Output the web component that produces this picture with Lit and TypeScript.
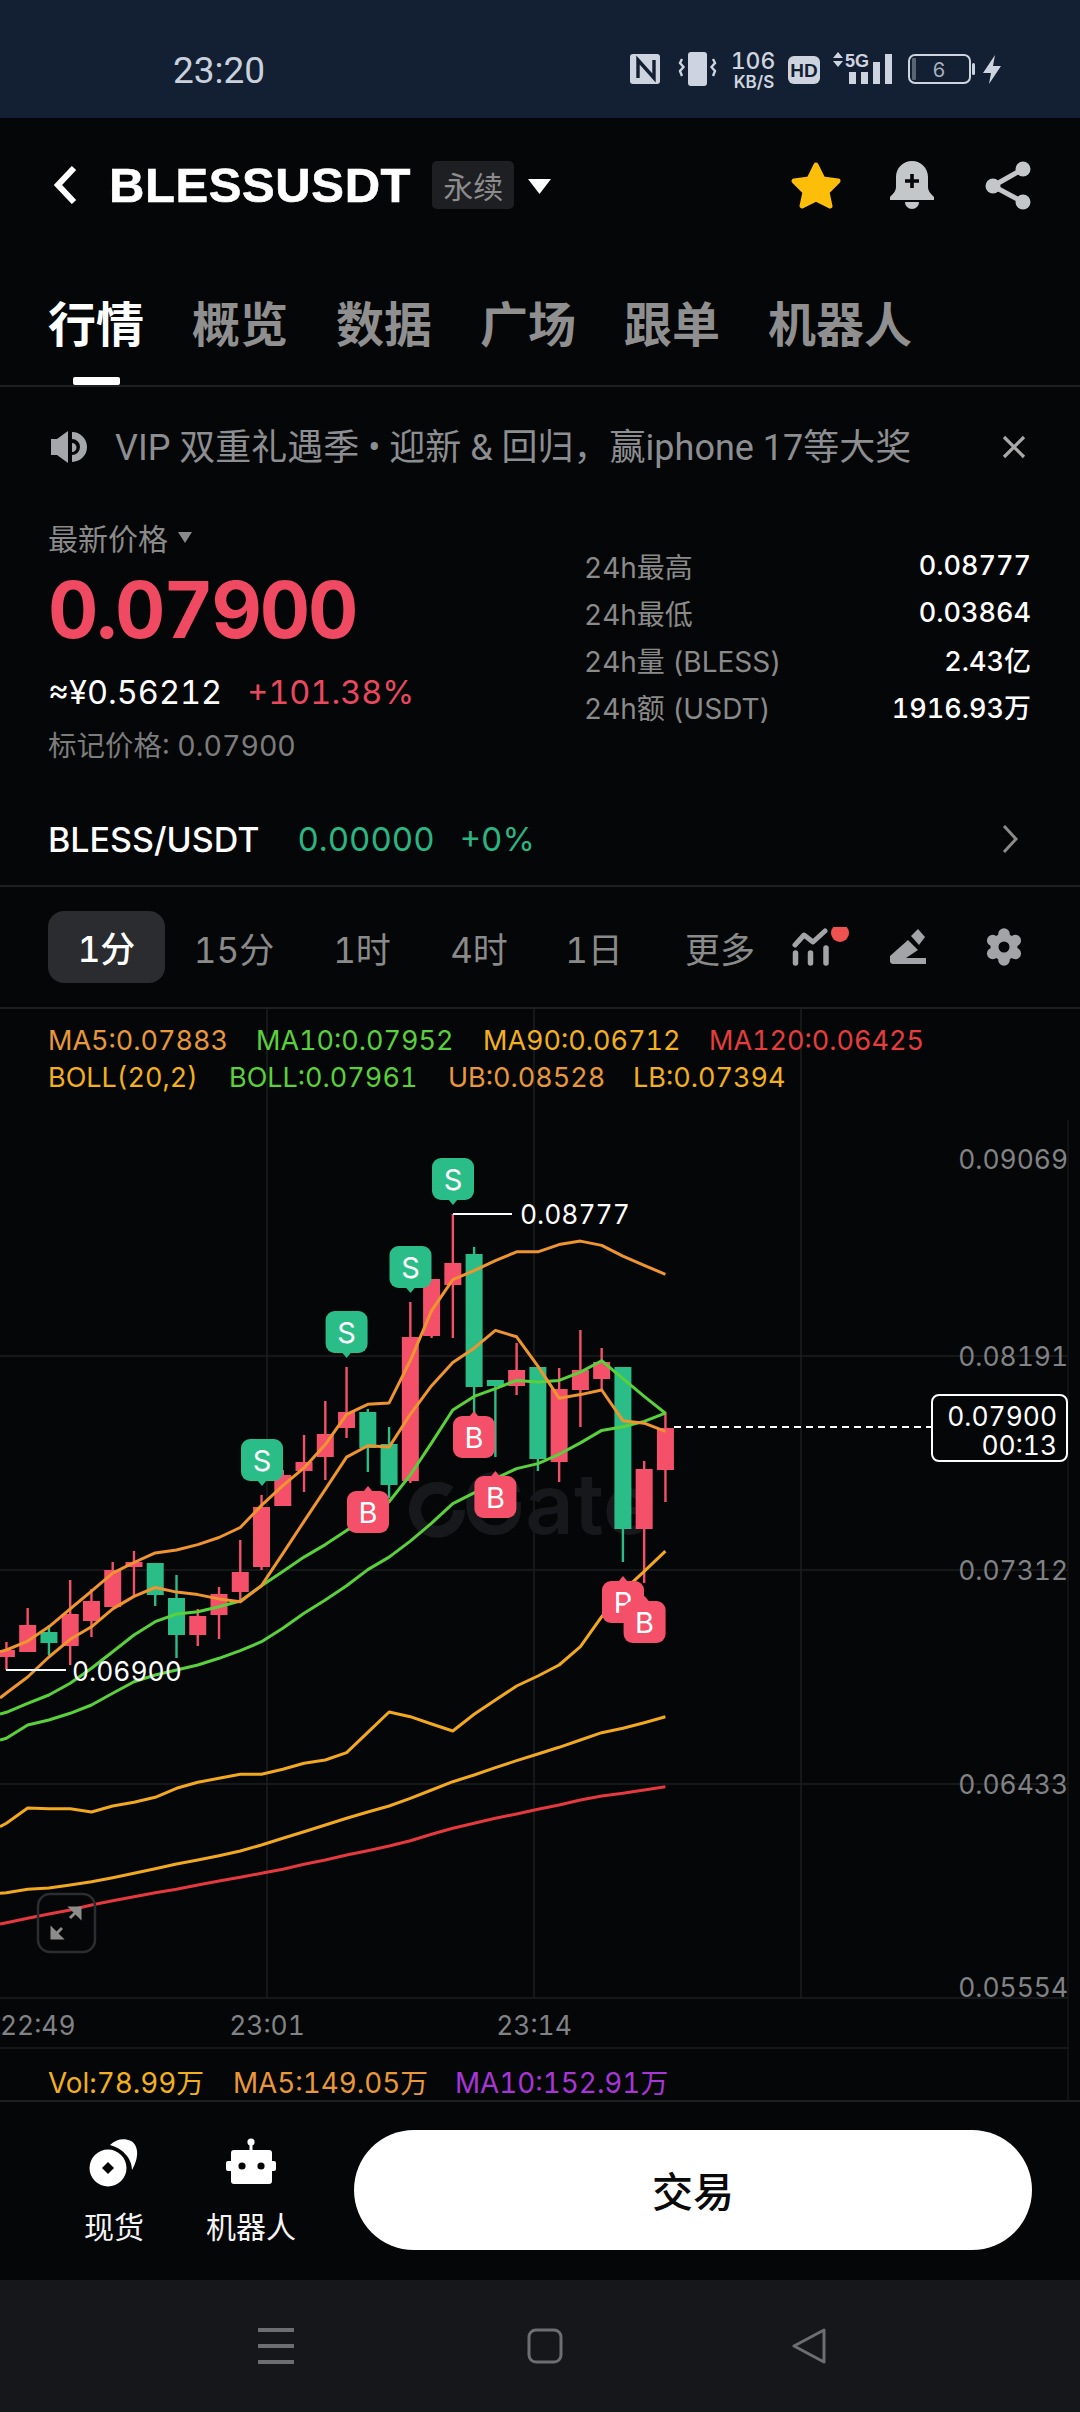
import { LitElement, html, css, svg } from "lit";
import { customElement } from "lit/decorators.js";

const z3 = (y: number) => 1100 + y / 2.8;
const z4 = (y: number) => 1600 + y / 3;
const X = (i: number) => (14 + 46.3 * i) / 2.178;
const RED = "#f4506a";
const GREEN = "#2bbd87";

// [red?, bodyTop, bodyBottom, wickTop, wickBottom]
const candles: [number, number, number, number, number][] = [
  [1, 1650, 1657, 1642, 1670], [1, 1625, 1652, 1608, 1652], [0, 1632, 1643, 1625, 1655], [1, 1614, 1646, 1580, 1665],
  [1, 1601, 1621, 1589, 1637], [1, 1570, 1607, 1562, 1607], [1, 1562, 1567, 1551, 1596], [0, 1563, 1595, 1563, 1606],
  [0, 1598, 1635, 1575, 1658], [1, 1616, 1635, 1609, 1646], [1, 1594, 1615, 1587, 1639], [1, 1572, 1592, 1540, 1602],
  [1, 1507, 1567, 1495, 1570], [1, 1475, 1506, 1470, 1506], [1, 1462, 1471, 1435, 1492], [1, 1434, 1457, 1401, 1480],
  [1, 1412, 1428, 1367, 1438], [0, 1412, 1448, 1409, 1472], [0, 1444, 1485, 1427, 1498], [1, 1337, 1481, 1302, 1483],
  [1, 1279, 1336, 1279, 1338], [1, 1263, 1285, 1214, 1338], [0, 1254, 1387, 1247, 1414], [0, 1380, 1386, 1380, 1457],
  [1, 1370, 1386, 1343, 1395], [0, 1367, 1459, 1367, 1471], [1, 1389, 1462, 1368, 1482], [1, 1370, 1390, 1330, 1427],
  [1, 1362, 1379, 1348, 1389], [0, 1367, 1529, 1367, 1562], [1, 1469, 1529, 1461, 1583], [1, 1428, 1470, 1412, 1502],
];

const toPts = (ys: number[], start: number) =>
  `0,${start.toFixed(1)} ` + ys.map((y, i) => `${X(i).toFixed(1)},${y.toFixed(1)}`).join(" ");

const lines: { c: string; pts: string }[] = [
  { c: "#f2a91f", pts: toPts([670, 624, 626, 626, 636, 618, 607, 592, 565, 547, 535, 523, 523, 508, 490, 480, 458, 397, 336, 350, 372, 393, 343, 300, 258, 228, 195, 140, 50].map(z4).concat([1375, 1320, 1263].map(z3)), z4(680)) },
  { c: "#f2a91f", pts: toPts([878, 868, 864, 855, 845, 833, 820, 806, 792, 780, 767, 753, 735, 715, 695, 675, 655, 636, 618, 595, 570, 545, 525, 503, 482, 462, 442, 420, 398, 385, 368, 350].map(z4), z4(880)) },
  { c: "#e5383f", pts: toPts([968, 955, 942, 930, 915, 902, 890, 878, 868, 855, 843, 832, 820, 808, 793, 780, 765, 752, 738, 722, 703, 685, 670, 655, 642, 628, 615, 600, 588, 580, 570, 560].map(z4), z4(972)) },
  { c: "#5ad13c", pts: toPts([415, 375, 360, 340, 315, 280, 245, 225, 210, 195, 175, 152, 125, 85, 40, 0].map(z4).concat([1360, 1315, 1280, 1235, 1185, 1130, 1100, 1060, 1032, 1018, 992, 960, 925, 915, 900, 877].map(z3)), z4(420)) },
  { c: "#5ad13c", pts: toPts([337, 310, 285, 250, 205, 155, 105, 65, 42, 35, 20, 3].map(z4).concat([1360, 1320, 1280, 1245, 1205, 1170, 1125, 1050, 960, 868, 830, 808, 785, 790, 785, 762, 730, 780, 830, 877].map(z3)), z4(342)) },
  { c: "#ee9530", pts: toPts([1693, 1677, 1657].concat([1510, 1475, 1425, 1390, 1365, 1378, 1385, 1397, 1405, 1360, 1270, 1180, 1090, 1000, 968, 972, 880, 800, 735, 695, 645, 663, 745, 835, 825, 812, 898, 905, 928].map(z3)), 1698) },
  { c: "#ee9530", pts: toPts([1540, 1515, 1475, 1425, 1375, 1325, 1295, 1268, 1260, 1245, 1225, 1197, 1135, 1080, 1030, 965, 880, 852, 848, 730, 590, 503, 478, 450, 425, 425, 405, 395, 407, 437, 463, 488].map(z3), z3(1545)) },
];

const badges: [string, number, number][] = [
  ["S", 262, 1439], ["S", 346.6, 1311], ["S", 410.5, 1246], ["S", 453, 1158],
  ["B", 368, 1491], ["B", 474, 1416], ["B", 495.4, 1476], ["P", 623, 1581], ["B", 644.6, 1601],
];

const legend: [string, number, string, number][] = [
  ["MA5:0.07883", 48, "#e8973a", 1040], ["MA10:0.07952", 256, "#5ad13c", 1040], ["MA90:0.06712", 483, "#f2b01e", 1040], ["MA120:0.06425", 709, "#e53d3d", 1040],
  ["BOLL(20,2)", 48, "#f2b01e", 1077], ["BOLL:0.07961", 229, "#5ad13c", 1077], ["UB:0.08528", 448, "#e8973a", 1077], ["LB:0.07394", 633, "#f2b01e", 1077],
];
const vol: [string, number, string][] = [["Vol:78.99万", 48, "#f2b01e"], ["MA5:149.05万", 233, "#e8973a"], ["MA10:152.91万", 455, "#a835d8"]];

const axis: [string, number][] = [["0.09069", 1159], ["0.08191", 1356], ["0.07312", 1570], ["0.06433", 1784], ["0.05554", 1987]];

@customElement("app-root")
export class AppRoot extends LitElement {
  static styles = css`
    :host { display: flex; flex-direction: column; width: 1080px; height: 2412px; background: #050607; color: #fff; font-family: Inter, "Noto Sans CJK SC", sans-serif; font-variant-numeric: tabular-nums; overflow: hidden; }
    .status { height: 118px; flex: none; background: #131f33; display: flex; align-items: center; justify-content: space-between; padding: 22px 76px 0 173px; box-sizing: border-box; }
    .time { font: 400 37px Roboto, sans-serif; color: #c9d1dc; }
    .header { height: 133px; flex: none; display: flex; align-items: center; padding-left: 54px; box-sizing: border-box; }
    .title { font: 700 49px "Liberation Sans", sans-serif; margin-left: 32px; letter-spacing: 0.6px; -webkit-text-stroke: 0.6px #fff; }
    .badge { margin-left: 21px; width: 82px; height: 48px; border-radius: 5px; background: #1e1f22; color: #8c8c8c; font-size: 30px; display: flex; align-items: center; justify-content: center; }
    .caret { margin: 4px 0 0 14px; }
    .actions { margin-left: auto; margin-right: 49px; }
    .tabs { flex: none; display: flex; gap: 48px; padding: 50px 0 0 48px; border-bottom: 2px solid #1d1f21; height: 84px; }
    .tab { display: flex; flex-direction: column; align-items: center; font-size: 48px; font-weight: 700; line-height: 48px; color: #8f8f8f; }
    .tab.on { color: #fff; }
    .tab i { display: block; width: 47px; height: 8px; margin-top: 28px; border-radius: 2px; }
    .tab.on i { background: #fff; }
    .notice { height: 120px; flex: none; display: flex; align-items: center; padding: 0 54px 0 51px; color: #8c8e91; font-size: 36px; font-family: Roboto, "Noto Sans CJK SC", sans-serif; box-sizing: border-box; }
    .notice span { margin: -6px 0 0 28px; flex: 1; white-space: nowrap; }
    .quote { flex: none; display: flex; padding-left: 48px; height: 256px; }
    .left { width: 536px; flex: none; }
    .latest { height: 60px; display: flex; align-items: center; font-size: 30px; color: #8a8a8a; gap: 10px; }
    .price { font-size: 78px; font-weight: 700; line-height: 86px; height: 88px; color: #f04a63; letter-spacing: -2.2px; }
    .sub { height: 74px; display: flex; align-items: center; font-size: 32.5px; gap: 25px; }
    .up { color: #e9485f; }
    .mark { height: 34px; line-height: 34px; font-size: 28.5px; color: #7c7c7c; }
    .stats { width: 447px; flex: none; padding-top: 35px; }
    .stat { height: 47px; display: flex; align-items: center; justify-content: space-between; font-size: 28px; color: #8a8a8a; }
    .stat b { font-weight: 500; font-size: 27px; color: #fff; }
    .pair { flex: none; height: 92px; padding: 30px 62px 0 48px; display: flex; align-items: center; border-bottom: 2px solid #1d1f21; font-size: 34px; font-weight: 500; }
    .pair .g { color: #2bb583; font-weight: 400; font-size: 33px; }
    .pair .g1 { margin-left: 38px; }
    .pair .g2 { margin-left: 25px; }
    .pair svg { margin-left: auto; }
    .frames { flex: none; height: 120px; display: flex; align-items: center; padding-left: 48px; border-bottom: 2px solid #1d1f21; }
    .grid { display: grid; grid-template-columns: 117px 138px 118px 116px 114px 138px; align-items: center; font-size: 35px; color: #8a8a8a; text-align: center; }
    .grid .on { height: 72px; line-height: 76px; background: #2a2c30; color: #fff; border-radius: 16px; font-weight: 500; }
    .i1 { margin-left: 3px; }
    .i2 { margin-left: 40px; }
    .i3 { margin-left: 59px; }
    .chart { display: block; flex: none; }
    .chart text { font-family: Inter, "Noto Sans CJK SC", sans-serif; font-size: 26.4px; dominant-baseline: central; }
    .chart .lg { font-size: 27px; }
    .chart .vl { font-size: 27.8px; }
    .chart .gray { fill: #808285; }
    .chart .white { fill: #fff; }
    .chart .end { text-anchor: end; }
    .chart .mid { text-anchor: middle; }
    .chart .bd { font-size: 29px; fill: #fff; text-anchor: middle; }
    .chart .wm { font-size: 84px; font-weight: 600; fill: #17181b; }
    .bar { flex: none; height: 178px; border-top: 2px solid #1d1f21; display: flex; align-items: flex-start; padding-left: 69px; }
    .item { width: 90px; display: flex; flex-direction: column; align-items: center; font-size: 30px; line-height: 36px; padding-top: 36px; color: #f4f4f4; }
    .item + .item { margin-left: 47px; }
    .item svg { margin-bottom: 21px; }
    .trade { margin: 28px 0 0 58px; width: 678px; height: 120px; padding-bottom: 2px; box-sizing: border-box; border-radius: 60px; background: #fff; color: #0a0a0a; font-size: 41px; font-weight: 500; display: flex; align-items: center; justify-content: center; }
    .nav { flex: 1; background: #15171a; display: flex; align-items: center; padding: 0 0 0 258px; box-sizing: border-box; }
    .nav .sq { margin-left: 233px; }
    .nav .tr { margin-left: 228px; }
  `;

  private statusIcons() {
    const c = "#ced4df";
    return html`<svg width="374" height="52" viewBox="629 44 374 52">
      <rect x="629" y="54" width="30" height="30" rx="3" fill="${c}" />
      <path d="M637 78V60l16 18V60" fill="none" stroke="#131f33" stroke-width="3.4" />
      <rect x="687" y="52" width="19" height="34" rx="3" fill="${c}" />
      <path d="M681 59l-2 4 3.500 4-3.500 4 2 5M712 59l2 4-3.500 4 3.500 4-2 5" fill="none" stroke="${c}" stroke-width="2.4" />
      <text x="752" y="69" text-anchor="middle" font-family="Inter" font-size="23" font-weight="500" fill="${c}">106</text>
      <text x="753" y="88" text-anchor="middle" font-family="Inter" font-size="17" font-weight="600" fill="${c}">KB/S</text>
      <rect x="787" y="56" width="32" height="28" rx="6" fill="${c}" />
      <text x="803" y="77" text-anchor="middle" font-family="Liberation Sans" font-size="19" font-weight="700" fill="#131f33">HD</text>
      <path d="M837 52l5 6h-10zM837 67l5-6h-10z" fill="${c}" />
      <text x="856" y="67" text-anchor="middle" font-family="Liberation Sans" font-size="18" font-weight="700" fill="${c}">5G</text>
      <rect x="848" y="72" width="7" height="12" fill="${c}" /><rect x="860" y="72" width="7" height="12" fill="${c}" />
      <rect x="872" y="62" width="7" height="22" fill="${c}" /><rect x="884" y="54" width="7" height="30" fill="${c}" />
      <rect x="908" y="55" width="61" height="28" rx="6" fill="none" stroke="${c}" stroke-width="2" />
      <rect x="911" y="58" width="4" height="22" rx="1" fill="#5a6474" />
      <rect x="971" y="63" width="3" height="12" rx="1.500" fill="${c}" />
      <text x="938" y="77" text-anchor="middle" font-family="Inter" font-size="20" fill="#a7afbb">6</text>
      <path d="M994 55l-12 18h8l-2 11 12-18h-8z" fill="${c}" />
    </svg>`;
  }

  private chart() {
    const w = 17;
    return html`<svg class="chart" width="1080" height="1091" viewBox="0 1009 1080 1091">
      ${[267, 534, 801].map((x) => svg`<line x1=${x} x2=${x} y1="1009" y2="1998" stroke="#1c1e20" stroke-width="1.5" />`)}
      <line x1="1068" x2="1068" y1="1120" y2="2100" stroke="#15171a" stroke-width="1.5" />
      ${[1356, 1570, 1784, 1998].map((y) => svg`<line x1="0" x2="1068" y1=${y} y2=${y} stroke="#1c1e20" stroke-width="1.5" />`)}
      <line x1="0" x2="1068" y1="2048" y2="2048" stroke="#1c1e20" stroke-width="1.5" />
      <path d="M450 1492A22 22 0 1 0 459 1510" fill="none" stroke="#17181b" stroke-width="12" />
      <text class="wm" x="462" y="1503" textLength="191" lengthAdjust="spacingAndGlyphs">Gate</text>
      ${axis.map(([t, y]) => svg`<text class="gray end" x="1068" y=${y}>${t}</text>`)}
      ${legend.map(([t, x, c, y]) => svg`<text class="lg" x=${x} y=${y} fill=${c}>${t}</text>`)}
      ${vol.map(([t, x, c]) => svg`<text class="vl" x=${x} y="2083" fill=${c}>${t}</text>`)}
      <text class="gray" x="0" y="2025">22:49</text>
      <text class="gray mid" x="267" y="2025">23:01</text>
      <text class="gray mid" x="534" y="2025">23:14</text>
      <text class="gray" x="949" y="2115">210.63万</text>
      ${candles.map(([r, t, b, wt, wb], i) => {
        const c = r ? RED : GREEN;
        return svg`<line x1=${X(i)} x2=${X(i)} y1=${wt} y2=${wb} stroke=${c} stroke-width="2.4" />
          <rect x=${X(i) - w / 2} y=${t} width=${w} height=${b - t} fill=${c} />`;
      })}
      ${lines.map((l) => svg`<polyline points=${l.pts} fill="none" stroke=${l.c} stroke-width="3" stroke-linejoin="round" />`)}
      <line x1="453" x2="512" y1="1214" y2="1214" stroke="#fff" stroke-width="2" />
      <text class="white" x="520" y="1214">0.08777</text>
      <line x1="6" x2="66" y1="1670" y2="1670" stroke="#fff" stroke-width="2" />
      <text class="white" x="72" y="1671">0.06900</text>
      <line x1="674" x2="931" y1="1427" y2="1427" stroke="#fff" stroke-width="2" stroke-dasharray="7 5" />
      <rect x="932" y="1395" width="135" height="66" rx="7" fill="#050607" stroke="#fff" stroke-width="2" />
      <text class="white end" x="1057" y="1416">0.07900</text>
      <text class="white end" x="1057" y="1445">00:13</text>
      ${badges.map(([t, x, y]) => {
        const sell = t === "S";
        const c = sell ? GREEN : RED;
        return svg`<rect x=${x - 21} y=${y} width="42" height="42" rx="9" fill=${c} />
          <path d=${sell ? `M${x - 5} ${y + 41}L${x} ${y + 47}L${x + 5} ${y + 41}z` : `M${x - 5} ${y + 1}L${x} ${y - 5}L${x + 5} ${y + 1}z`} fill=${c} />
          <text class="bd" x=${x} y=${y + 21}>${t}</text>`;
      })}
      <rect x="38" y="1894" width="57" height="58" rx="12" fill="none" stroke="#2b2d30" stroke-width="2.5" />
      <path d="M70 1918l10-10M80 1908h-9l9 9zM62 1928l-10 10M52 1938h9l-9-9z" fill="#8c8c8c" stroke="#8c8c8c" stroke-width="3" />
    </svg>`;
  }

  render() {
    const gearLobes = [90, 150, 210, 270, 330, 30].map((a) => [13 * Math.cos((a * Math.PI) / 180), 13 * Math.sin((a * Math.PI) / 180)]);
    return html`
      <div class="status"><span class="time">23:20</span>${this.statusIcons()}</div>
      <div class="header">
        <svg width="23" height="38" viewBox="0 0 23 38"><path d="M20 2L4 19l16 17" fill="none" stroke="#fff" stroke-width="6" /></svg>
        <span class="title">BLESSUSDT</span>
        <span class="badge">永续</span>
        <svg class="caret" width="23" height="15" viewBox="0 0 23 15"><path d="M0 0h23L11.500 15z" fill="#fff" /></svg>
        <svg class="actions" width="241" height="50" viewBox="790 158 241 50">
          <polygon points="816,163 823,177 838,179 827,190 830,204 816,197 802,204 805,190 794,179 809,177" fill="#fdbe0a" stroke="#fdbe0a" stroke-width="5" stroke-linejoin="round" />
          <path d="M912 159c-9 0-16 7-16 16v10c0 4-3 7-6 10v3h44v-3c-3-3-6-6-6-10v-10c0-9-7-16-16-16z" fill="#c4c7ca" />
          <path d="M905 200h14a7 7 0 0 1-14 0z" fill="#c4c7ca" />
          <path d="M912 172v14M905 179h14" stroke="#050607" stroke-width="3.6" />
          <path d="M1023 167l-30 17 30 16" fill="none" stroke="#c4c7ca" stroke-width="5" />
          <circle cx="1023" cy="167" r="7.500" fill="#c4c7ca" /><circle cx="993" cy="184" r="7.500" fill="#c4c7ca" /><circle cx="1023" cy="200" r="7.500" fill="#c4c7ca" />
        </svg>
      </div>
      <div class="tabs">
        ${["行情", "概览", "数据", "广场", "跟单", "机器人"].map((t, i) => html`<div class="tab ${i === 0 ? "on" : ""}">${t}<i></i></div>`)}
      </div>
      <div class="notice">
        <svg width="36" height="32" viewBox="51 429 36 32">
          <path d="M51 437h6l11-8v32l-11-8h-6z" fill="#a5a8ab" />
          <path d="M72 430A15 15 0 0 1 72 460V453A8 8 0 0 0 72 437zM72 441a4.500 4.500 0 0 1 0 9z" fill="#a5a8ab" />
        </svg>
        <span>VIP 双重礼遇季 • 迎新 & 回归，赢iphone 17等大奖</span>
        <svg width="24" height="24" viewBox="0 0 24 24"><path d="M2 2l20 20M22 2L2 22" stroke="#a8a8a8" stroke-width="3.2" /></svg>
      </div>
      <div class="quote">
        <div class="left">
          <div class="latest">最新价格<svg width="14" height="11" viewBox="0 0 14 11"><path d="M0 0h14L7 11z" fill="#8a8a8a" /></svg></div>
          <div class="price">0.07900</div>
          <div class="sub"><span>≈¥0.56212</span><span class="up">+101.38%</span></div>
          <div class="mark">标记价格: 0.07900</div>
        </div>
        <div class="stats">
          <div class="stat">24h最高<b>0.08777</b></div>
          <div class="stat">24h最低<b>0.03864</b></div>
          <div class="stat">24h量 (BLESS)<b>2.43亿</b></div>
          <div class="stat">24h额 (USDT)<b>1916.93万</b></div>
        </div>
      </div>
      <div class="pair">BLESS/USDT<span class="g g1">0.00000</span><span class="g g2">+0%</span>
        <svg width="16" height="28" viewBox="0 0 16 28"><path d="M2 1l12 13L2 27" fill="none" stroke="#8a8a8a" stroke-width="3" /></svg>
      </div>
      <div class="frames">
        <div class="grid"><div class="on">1分</div><div>15分</div><div>1时</div><div>4时</div><div>1日</div><div>更多</div></div>
        <svg class="i1" width="58" height="40" viewBox="792 928 58 40">
          <path d="M795 946l9-10 9 7 12-11" fill="none" stroke="#a2a4a7" stroke-width="5" stroke-linecap="round" stroke-linejoin="round" />
          <path d="M795.500 954v10M810.500 954v10M826 949v15" stroke="#a2a4a7" stroke-width="5.500" stroke-linecap="round" />
          <circle cx="840" cy="934" r="9" fill="#f0524f" />
        </svg>
        <svg class="i2" width="36" height="36" viewBox="888 930 36 36">
          <path d="M888 957l18-16 10 10-12 8h20v6h-34l-2-2z" fill="#a2a4a7" />
          <path d="M909 937l7-7 7 8-6 8z" fill="#a2a4a7" />
        </svg>
        <svg class="i3" width="38" height="38" viewBox="-19 -19 38 38">
          <circle r="13.500" fill="#a2a4a7" />
          ${gearLobes.map(([x, y]) => svg`<circle cx=${x} cy=${y} r="5.800" fill="#a2a4a7" />`)}
          <circle r="5.500" fill="#050607" />
        </svg>
      </div>
      ${this.chart()}
      <div class="bar">
        <div class="item">
          <svg width="60" height="50" viewBox="84 2140 60 50">
            <circle cx="108" cy="2170" r="18.500" fill="#fff" />
            <path d="M108 2164l6 6-6 6-6-6z" fill="#050607" />
            <path d="M110 2147c6-6 14-7 21-4 7 4 9 15 1 29 0-12-10-22-22-25z" fill="#fff" />
          </svg>现货
        </div>
        <div class="item">
          <svg width="60" height="50" viewBox="222 2138 60 50">
            <circle cx="252" cy="2142" r="3.600" fill="#fff" /><rect x="250.500" y="2142" width="3" height="10" fill="#fff" />
            <rect x="232" y="2150" width="41" height="34" rx="3" fill="#fff" />
            <rect x="227" y="2161" width="50" height="10" rx="2" fill="#fff" />
            <circle cx="243" cy="2166" r="3.600" fill="#050607" /><circle cx="262" cy="2166" r="3.600" fill="#050607" />
          </svg>机器人
        </div>
        <div class="trade">交易</div>
      </div>
      <div class="nav">
        <svg width="36" height="36" viewBox="0 0 36 36"><path d="M0 2h36M0 18h36M0 34h36" stroke="#6c6e72" stroke-width="3.800" /></svg>
        <svg class="sq" width="36" height="36" viewBox="0 0 36 36"><rect x="2" y="2" width="32" height="32" rx="7" fill="none" stroke="#6c6e72" stroke-width="3" /></svg>
        <svg class="tr" width="36" height="36" viewBox="0 0 36 36"><path d="M33 2v32L3 18z" fill="none" stroke="#6c6e72" stroke-width="3" stroke-linejoin="round" /></svg>
      </div>
    `;
  }
}
